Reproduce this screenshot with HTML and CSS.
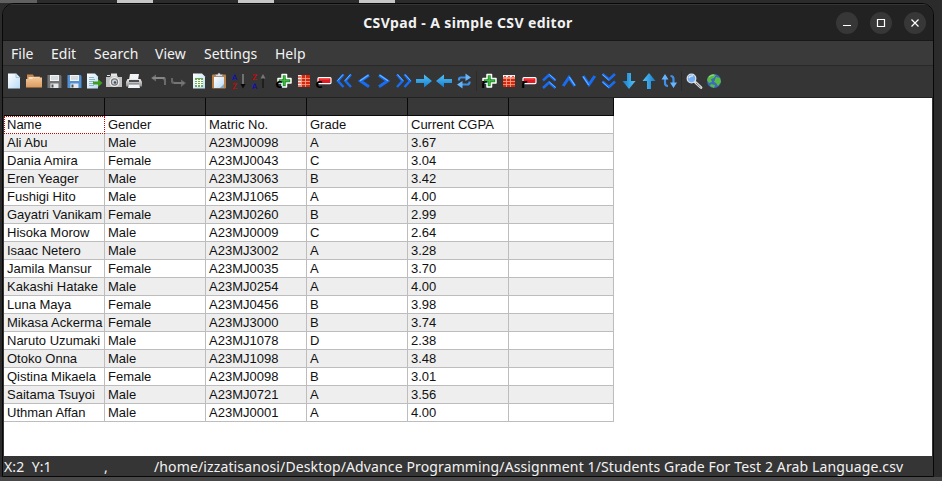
FILE: index.html
```
<!DOCTYPE html>
<html lang="en">
<head>
<meta charset="utf-8">
<title>CSVpad - A simple CSV editor</title>
<link rel="stylesheet" href="styles.css">
</head>
<body>
<svg class="defs" aria-hidden="true">
  <defs>
    <linearGradient id="sheet" x1="0" y1="0" x2="1" y2="1"><stop offset="0" stop-color="#fff"/><stop offset="1" stop-color="#b9dbf5"/></linearGradient>
    <linearGradient id="tan" x1="0" y1="0" x2="0" y2="1"><stop offset="0" stop-color="#f3c797"/><stop offset="1" stop-color="#d99a5d"/></linearGradient>
    <linearGradient id="cyan" x1="0" y1="0" x2="0" y2="1"><stop offset="0" stop-color="#55c3f5"/><stop offset="1" stop-color="#147bd0"/></linearGradient>
    <linearGradient id="metal" x1="0" y1="0" x2="0" y2="1"><stop offset="0" stop-color="#eee"/><stop offset="1" stop-color="#8b8b8b"/></linearGradient>
    <symbol id="plus" viewBox="0 0 16 16"><path d="M6 1.500h4.500v4H15V10h-4.500v4H6v-4H2V5.500h4z" fill="#1c9a27" stroke="#fff" stroke-width="1.500" stroke-linejoin="round"/><path d="M8.300 3v9M4 7.700h9" stroke="#55b752" stroke-width="1"/></symbol>
    <symbol id="minus" viewBox="0 0 16 16"><rect x="2" y="4.600" width="13" height="6" rx="1" fill="#e01b24" stroke="#fff" stroke-width="1.200"/><path d="M4 6h9" stroke="#ff5549"/></symbol>
    <symbol id="grid" viewBox="0 0 16 16"><path fill="#d6260c" d="M2 2h12v12H2z"/><path d="M2 5.500h12M2 8.500h12M2 11.500h12M5.500 2v12M9.500 2v12" stroke="#f3a891" stroke-width=".8"/></symbol>
    <symbol id="double" viewBox="0 0 16 16"><path d="M7.500 1.500 2 8l5.500 6M15 1.500 9.500 8l5.500 6" fill="none" stroke="#176cf0" stroke-width="2.500"/><path d="M7 1.500 1.500 7.600M14.500 1.500 9 7.600" stroke="#68b6ff" stroke-width="1"/></symbol>
    <symbol id="single" viewBox="0 0 16 16"><path d="M13 2.200 4.500 8l8.500 5.800" fill="none" stroke="#176cf0" stroke-width="3"/><path d="M12.500 2 4 7.700" stroke="#68b6ff" stroke-width="1.200"/></symbol>
    <symbol id="arrow" viewBox="0 0 16 16"><path d="M0 6h8V1.500l8 6.500-8 6.500V10H0z" fill="url(#cyan)"/></symbol>
    <symbol id="swap" viewBox="0 0 16 16"><path d="M3 7.500V6.500Q3 4.500 5 4.500h6M13.500 8.500v1Q13.500 11.500 11 11.500H5" fill="none" stroke="#3d8fe8" stroke-width="2.200"/><path d="M9.500 0.500 15 4.500l-5.500 3.500zM6.500 8 1 11.500l5.500 4z" fill="#66b6ff"/></symbol>
    <symbol id="floppy" viewBox="0 0 16 16"><path d="M2 1.500h12l1 1v12H1v-13z" fill="currentColor"/><path d="M3.500 1.500h9v6h-9z" fill="#f2f4f6"/><path d="M4.500 3.500h7M4.500 5.500h7" stroke="#a3adb5" stroke-width=".7"/><path d="M4 10h8v4.500H4z" fill="#e5e8eb"/><path d="M5 11h2v3H5z" fill="#4d5359"/></symbol>
  </defs>
</svg>

<div class="desktop">
  <div class="backdrop" aria-hidden="true"><i class="tab tab-wide"></i><i class="tab"></i><i class="tab"></i><i class="tab"></i></div>
  <main class="window">
    <header class="titlebar">
      <h1>CSVpad - A simple CSV editor</h1>
      <div class="controls">
        <button aria-label="Minimize"><svg viewBox="0 0 22 22"><path d="M7 13.500h8"/></svg></button>
        <button aria-label="Maximize"><svg viewBox="0 0 22 22"><path d="M7.500 7.500h7v7h-7z"/></svg></button>
        <button aria-label="Close"><svg viewBox="0 0 22 22"><path d="m7.500 7.500 7 7m0-7-7 7"/></svg></button>
      </div>
    </header>
    <nav class="menubar">
      <span class="m-file">File</span><span class="m-edit">Edit</span><span class="m-search">Search</span><span class="m-view">View</span><span class="m-settings">Settings</span><span class="m-help">Help</span>
    </nav>
    <div class="toolbar">
      <svg class="tool" viewBox="0 0 16 16"><path d="M2 .5h8L14 4.500v11H2z" fill="url(#sheet)"/><path d="M10 .5v4h4" fill="#d6eafa" stroke="#8cb2cc" stroke-width=".6"/></svg>
      <svg class="tool" viewBox="0 0 16 16"><path d="M1 1.500h6l1 2h6v4H1z" fill="#c7884f"/><path d="M2.500 4h11v4h-11z" fill="#f6dfc3"/><path d="M0 6h6l1.500-1.500H16V14.500H0z" fill="url(#tan)"/></svg>
      <svg class="tool gray" viewBox="-.5 -.5 17 17"><use href="#floppy"/></svg>
      <svg class="tool azure" viewBox="-.5 -.5 17 17"><use href="#floppy"/></svg>
      <svg class="tool" viewBox="0 0 16 16"><path d="M1 .5h8L12 3.500v12H1z" fill="url(#sheet)"/><path d="M3 4.500h5M3 6.500h6M3 8.500h5M3 10.500h4M3 12.500h5" stroke="#7aa6b8" stroke-width=".8"/><path d="M7 8.500h5V6l4.500 4-4.500 4v-2.500H7z" fill="#3f9d22"/></svg>
      <svg class="tool" viewBox="0 0 16 16"><path d="M0 4h4l1-2h6l1 2h4v10H0z" fill="#bfc1c2"/><path d="M5 .5h6v3H5zM1 2h3v1H1z" fill="#e5e5e5"/><circle cx="8.500" cy="9" r="5" fill="#eee"/><circle cx="8.500" cy="9" r="3.700" fill="#777"/><circle cx="8.500" cy="9" r="2.500" fill="#c8d2da"/><circle cx="9" cy="9.500" r="1.300" fill="#46515a"/></svg>
      <svg class="tool" viewBox="0 0 16 16"><path d="M4 1h9l-1 6H3z" fill="#f2f5f7"/><path d="M1.500 6h13l1.500 3v4.500H0V9z" fill="url(#metal)"/><path d="M3 7h10v2H3z" fill="#4b4d50"/><path d="M3 11h10l1 4H2z" fill="#eef3f8"/><path d="M3 11h10" stroke="#777"/></svg>
      <i class="gap"></i>
      <svg class="tool" viewBox="0 0 16 16"><path d="M0 5 5 1.500V4h8q2 0 2 3v5h-2V8.500Q13 6 11.500 6H5v2.500z" fill="#6b6b6b"/><path d="M1.500 5h12" stroke="#a3a3a3"/></svg>
      <svg class="tool" viewBox="0 0 16 16"><path d="M0 5h2v2.500Q2 9 4.500 9H10V6.500l5 3.500-5 4v-3H3Q0 11 0 8.500z" fill="#666"/><path d="M3 10h10" stroke="#858585"/></svg>
      <svg class="tool" viewBox="0 0 16 16"><path d="M2 .5h9L14 3.500v12H2z" fill="url(#sheet)"/><path d="M4 5h8v9H4z" fill="#6fa857"/><path d="M4 7.500h8M4 9.500h8M4 11.500h8M6.500 6v8M9.500 6v8" stroke="#f4fff1"/></svg>
      <svg class="tool" viewBox="0 0 16 16"><rect x="1" y="1.500" width="14" height="14" rx="1" fill="#b98248"/><path d="M3 4h10v11H3z" fill="url(#sheet)"/><path d="M4.500 3.500v-2h2l1-1.500h1l1 1.500h2v2z" fill="#ddd" stroke="#777" stroke-width=".5"/><path d="m9 15 4-4v4z" fill="#8ba8bb"/></svg>
      <svg class="tool" viewBox="0 0 16 16"><text x="1" y="6.500" class="sort navy">A</text><text x="1" y="15.500" class="sort red">Z</text><path d="M12 1v11" stroke="#999" stroke-width="1.200"/><path d="M9.500 11h5L12 15.500z" fill="#080808"/></svg>
      <svg class="tool" viewBox="0 0 16 16"><text x="1" y="6.500" class="sort red">Z</text><text x="1" y="15.500" class="sort navy">A</text><path d="M12 4v11" stroke="#111" stroke-width="1.200"/><path d="M9.500 5.500h5L12 1z" fill="#777"/></svg>
      <i class="gap"></i>
      <svg class="tool" viewBox="0 0 16 16"><use href="#plus"/><text x="-.5" y="15" class="mark">c</text></svg>
      <svg class="tool" viewBox="0 0 16 16"><use href="#grid"/><path d="M2 2h3v12H2z" fill="#f6eeee"/><path d="M2 4h3M2 7h3M2 10h3M2 13h3" stroke="#df563f" stroke-width="1.500"/></svg>
      <svg class="tool" viewBox="0 0 16 16"><use href="#minus"/><text x="-.5" y="15" class="mark">c</text></svg>
      <svg class="tool" viewBox="0 0 16 16"><use href="#double"/></svg>
      <svg class="tool" viewBox="0 0 16 16"><use href="#single"/></svg>
      <svg class="tool flip" viewBox="0 0 16 16"><use href="#single"/></svg>
      <svg class="tool flip" viewBox="0 0 16 16"><use href="#double"/></svg>
      <svg class="tool" viewBox="0 0 16 16"><use href="#arrow"/></svg>
      <svg class="tool flip" viewBox="0 0 16 16"><use href="#arrow"/></svg>
      <svg class="tool" viewBox="0 0 16 16"><use href="#swap"/></svg>
      <i class="gap rule"></i>
      <svg class="tool" viewBox="0 0 16 16"><use href="#plus"/><text x="0" y="15" class="mark">r</text></svg>
      <svg class="tool" viewBox="0 0 16 16"><use href="#grid"/><path d="M2 2h12v2.500H2z" fill="#f6eeee"/><path d="M3 3.500h2m2 0h2m2 0h2" stroke="#df563f"/></svg>
      <svg class="tool" viewBox="0 0 16 16"><use href="#minus"/><text x="0" y="15" class="mark">r</text></svg>
      <svg class="tool up" viewBox="0 0 16 16"><use href="#double"/></svg>
      <svg class="tool up" viewBox="0 0 16 16"><use href="#single"/></svg>
      <svg class="tool down" viewBox="0 0 16 16"><use href="#single"/></svg>
      <svg class="tool down" viewBox="0 0 16 16"><use href="#double"/></svg>
      <svg class="tool up" viewBox="0 0 16 16"><use href="#arrow"/></svg>
      <svg class="tool down" viewBox="0 0 16 16"><use href="#arrow"/></svg>
      <svg class="tool" viewBox="0 0 16 16"><path d="M7 13Q4 13 4 10V5M9.500 3q3 0 3 3v5" fill="none" stroke="#3d8fe8" stroke-width="2.200"/><path d="M.5 6.500 4 1l3.500 5.500zM9 9.500h7L12.500 15z" fill="#66b6ff"/></svg>
      <i class="gap rule"></i>
      <svg class="tool" viewBox="0 0 16 16"><path d="m9 9 6 5.500" stroke="#d5d8dc" stroke-width="2.800" stroke-linecap="round"/><path d="m10 10 4.500 4.200" stroke="#777" stroke-width="1"/><circle cx="5.500" cy="5.500" r="4.300" fill="#75aef0" stroke="#d9e0e8" stroke-width="1.300"/><path d="M3 5q1-2.500 4-2" fill="none" stroke="#d9eaff" stroke-width="1.400"/></svg>
      <svg class="tool" viewBox="0 0 16 16"><circle cx="8" cy="8" r="7" fill="#3c68bd"/><path d="M2 4q3-4 8-2L8 5 5 6l1 3-3 1-2-3zM10 4l4 1 1 4-3 4-2-3-2-1zM5 11l4 1-1 3-4-2z" fill="#58bb45"/><path d="M3 4q2-2 5-2" fill="none" stroke="#a8d6a2"/></svg>
    </div>
    <section class="editor">
      <table>
        <colgroup><col><col><col><col><col><col class="last"></colgroup>
        <thead><tr><th></th><th></th><th></th><th></th><th></th><th></th></tr></thead>
        <tbody>
          <tr><td class="selected">Name</td><td>Gender</td><td>Matric No.</td><td>Grade</td><td>Current CGPA</td><td></td></tr>
          <tr><td>Ali Abu</td><td>Male</td><td>A23MJ0098</td><td>A</td><td>3.67</td><td></td></tr>
          <tr><td>Dania Amira</td><td>Female</td><td>A23MJ0043</td><td>C</td><td>3.04</td><td></td></tr>
          <tr><td>Eren Yeager</td><td>Male</td><td>A23MJ3063</td><td>B</td><td>3.42</td><td></td></tr>
          <tr><td>Fushigi Hito</td><td>Male</td><td>A23MJ1065</td><td>A</td><td>4.00</td><td></td></tr>
          <tr><td>Gayatri Vanikam</td><td>Female</td><td>A23MJ0260</td><td>B</td><td>2.99</td><td></td></tr>
          <tr><td>Hisoka Morow</td><td>Male</td><td>A23MJ0009</td><td>C</td><td>2.64</td><td></td></tr>
          <tr><td>Isaac Netero</td><td>Male</td><td>A23MJ3002</td><td>A</td><td>3.28</td><td></td></tr>
          <tr><td>Jamila Mansur</td><td>Female</td><td>A23MJ0035</td><td>A</td><td>3.70</td><td></td></tr>
          <tr><td>Kakashi Hatake</td><td>Male</td><td>A23MJ0254</td><td>A</td><td>4.00</td><td></td></tr>
          <tr><td>Luna Maya</td><td>Female</td><td>A23MJ0456</td><td>B</td><td>3.98</td><td></td></tr>
          <tr><td>Mikasa Ackerma</td><td>Female</td><td>A23MJ3000</td><td>B</td><td>3.74</td><td></td></tr>
          <tr><td>Naruto Uzumaki</td><td>Male</td><td>A23MJ1078</td><td>D</td><td>2.38</td><td></td></tr>
          <tr><td>Otoko Onna</td><td>Male</td><td>A23MJ1098</td><td>A</td><td>3.48</td><td></td></tr>
          <tr><td>Qistina Mikaela</td><td>Female</td><td>A23MJ0098</td><td>B</td><td>3.01</td><td></td></tr>
          <tr><td>Saitama Tsuyoi</td><td>Male</td><td>A23MJ0721</td><td>A</td><td>3.56</td><td></td></tr>
          <tr><td>Uthman Affan</td><td>Male</td><td>A23MJ0001</td><td>A</td><td>4.00</td><td></td></tr>
        </tbody>
      </table>
    </section>
    <footer class="status"><span class="position">X:2&nbsp; Y:1</span><span class="delimiter">,</span><span class="path">/home/izzatisanosi/Desktop/Advance Programming/Assignment 1/Students Grade For Test 2 Arab Language.csv</span></footer>
  </main>
</div>
</body>
</html>
```
FILE: styles.css
```
* { box-sizing: border-box; }
body { margin: 0; overflow: hidden; }
.defs { position: absolute; width: 0; height: 0; }
.desktop {
  width: 942px; height: 481px; padding-left: 2px;
  background: linear-gradient(#2b2b2b 0 477px, #484848 477px);
}
.backdrop { display: flex; gap: 85px; height: 3px; margin-left: -2px; }
.tab { width: 36px; background: #c6c6c6; }
.tab-wide { width: 37px; margin-right: -5px; background: #606060; }
.window {
  display: flex; flex-direction: column; width: 932px; height: 474px;
  border: 1px solid #080808; border-radius: 12px 12px 0 0;
  background: #353535; color: #f2f2f2; overflow: hidden;
  font-family: "Noto Sans", "Open Sans", sans-serif;
}
.titlebar {
  display: grid; grid-template-columns: 1fr auto 1fr; align-items: center;
  height: 37px; flex: none; background: #222; border-top: 1px solid #353535; border-bottom: 1px solid #181818;
}
.titlebar h1 { grid-column: 2; margin: 0; font-size: 14px; letter-spacing: .39px; font-weight: 700; line-height: 18px; white-space: nowrap; }
.controls { display: flex; gap: 12px; justify-content: flex-end; padding-right: 7px; }
.controls button { width: 22px; height: 22px; padding: 0; border: 0; border-radius: 50%; background: #373737; }
.controls svg { display: block; fill: none; stroke: #fff; stroke-width: 1.2; }
.menubar {
  display: flex; height: 25px; flex: none; padding: 1px 0 0 8px; align-items: center;
  background: #3a3a3a; border-bottom: 1px solid #292929; font-size: 14px; line-height: 23px;
}
.menubar span { white-space: nowrap; }
.m-file { width: 40px; }
.m-edit { width: 43px; }
.m-search { width: 61px; }
.m-view { width: 49px; }
.m-settings { width: 71px; }
.toolbar { display: flex; align-items: center; gap: 4px; height: 32px; flex: none; padding: 0 0 1px 3px; border-bottom: 1px solid #222; }
.tool { width: 16px; height: 16px; flex: none; overflow: visible; }
.gap { width: 1px; height: 20px; flex: none; }
.rule { background: #2b2b2b; }
.gray { color: #747474; }
.azure { color: #4f91d4; }
.flip { transform: scaleX(-1); }
.up { transform: rotate(90deg); }
.down { transform: rotate(-90deg); }
/* Tool order in the row group: arrow down is the right arrow turned clockwise. */
.sort { font: 7.500px "DejaVu Sans", sans-serif; }
.navy { fill: #0000d8; }
.red { fill: #e00000; }
.mark { font: bold 12px "DejaVu Sans", sans-serif; fill: #000; }
.editor { flex: 1; margin: 0 1px; background: #fff; color: #111; min-height: 0; }
table { width: 610px; table-layout: fixed; border-spacing: 0; font: 13px "Liberation Sans", sans-serif; }
col { width: 101px; }
.last { width: 105px; }
th { height: 18px; padding: 0; background: #383838; border-right: 1px solid #080808; border-bottom: 1px solid #080808; }
td {
  height: 18px; padding: 0 0 0 3px; line-height: 17px; white-space: nowrap; overflow: hidden;
  border-right: 1px solid #bdbdbd; border-bottom: 1px solid #bdbdbd;
}
tbody tr:nth-child(even) { background: #eee; }
td.selected { border: 1px dotted #d00000; padding-left: 2px; line-height: 16px; }
.status { display: flex; height: 20px; flex: none; align-items: center; padding: 1px 0 0 1px; font-size: 14px; line-height: 19px; white-space: pre; }
.position { width: 100px; letter-spacing: .1px; }
.delimiter { width: 50px; }
.path { letter-spacing: .125px; }
```
